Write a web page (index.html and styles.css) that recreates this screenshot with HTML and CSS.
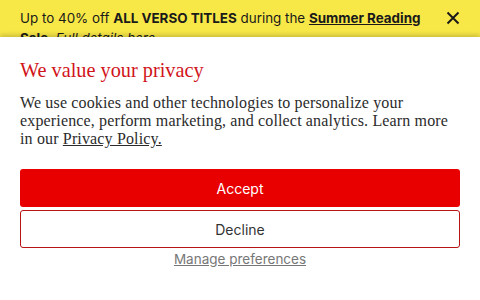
FILE: index.html
```html
<!DOCTYPE html>
<html>
<head>
<meta charset="utf-8">
<link rel="stylesheet" href="styles.css">
</head>
<body>
<div class="banner">
  <p class="banner-text">Up to 40% off <b>ALL VERSO TITLES</b> during the <a class="banner-link" href="#">Summer Reading Sale</a>. <i>Full details here.</i></p>
  <button class="close" aria-label="Close">
    <svg width="14" height="14" viewBox="0 0 14 14"><path d="M1.5 1.5 L12.5 12.5 M12.5 1.5 L1.5 12.5" stroke="#1a1a1a" stroke-width="2" fill="none"/></svg>
  </button>
</div>
<div class="dialog">
  <h2 class="title">We value your privacy</h2>
  <p class="body">We use cookies and other technologies to personalize your experience, perform marketing, and collect analytics. Learn more in our <a class="policy" href="#">Privacy Policy.</a></p>
  <div class="actions">
    <button class="btn accept">Accept</button>
    <button class="btn decline">Decline</button>
    <a class="manage" href="#">Manage preferences</a>
  </div>
</div>
</body>
</html>
```
FILE: styles.css
```css
html, body { margin: 0; padding: 0; }
body { width: 480px; height: 300px; overflow: hidden; background: #fff; position: relative; }
.banner {
  background: #f8e847;
  display: flex;
  align-items: flex-start;
  padding: 8px 20px 0 20px;
  height: 60px;
  font-family: Inter, "Liberation Sans", sans-serif;
  color: #1a1a1a;
}
.banner-text { margin: 0; font-size: 13.4px; line-height: 20px; flex: 1; padding-right: 18px; }
.banner-text b { font-weight: 700; }
.banner-link { color: #1a1a1a; font-weight: 700; text-decoration: underline; }
.close { border: 0; background: none; padding: 0; margin-top: 3px; width: 14px; height: 14px; }
.close svg { display: block; }
.dialog {
  position: absolute;
  top: 37px; left: 0; right: 0; bottom: 0;
  background: #fff;
  box-shadow: 0 -2px 5px rgba(0,0,0,0.2);
  padding: 20px 20px 0 20px;
}
.title {
  margin: 0;
  font-family: "Liberation Serif", serif;
  font-weight: 400;
  font-size: 20.3px;
  line-height: 26px;
  color: #d1131a;
}
.body {
  margin: 11px 0 0 0;
  font-family: "Liberation Serif", serif;
  font-size: 16px;
  letter-spacing: 0.15px;
  line-height: 18px;
  color: #2b2b2b;
}
.policy { color: #2b2b2b; text-decoration: underline; }
.actions { display: flex; flex-direction: column; margin-top: 21px; gap: 3px; align-items: stretch; }
.btn {
  height: 38px;
  border-radius: 3px;
  font-family: Inter, "Liberation Sans", sans-serif;
  font-size: 14px;
}
.accept { background: #e80000; color: #fff; border: 0; }
.decline { background: #fff; color: #333; border: 1px solid #b81414; }
.manage {
  align-self: center;
  margin-top: 0;
  font-family: Inter, "Liberation Sans", sans-serif;
  font-size: 13.5px;
  color: #777;
  text-decoration: underline;
}
```
